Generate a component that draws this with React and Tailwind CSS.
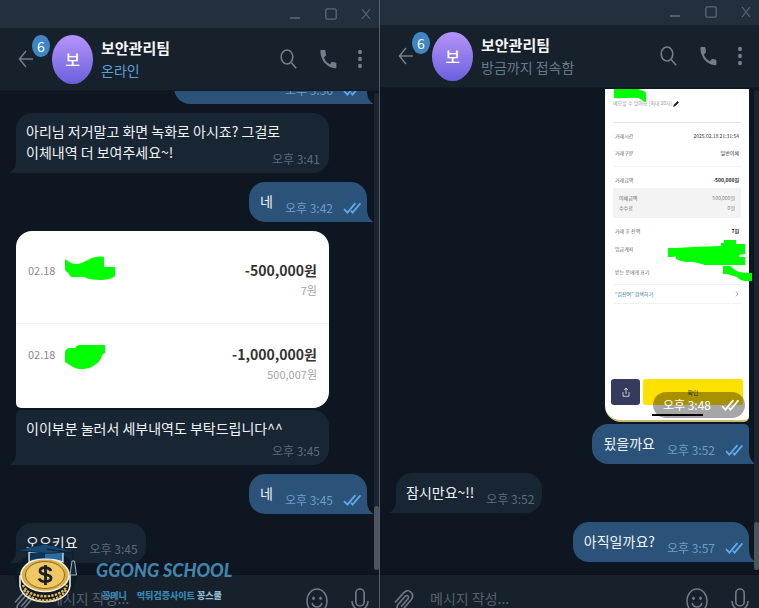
import { clsx } from 'clsx'

const outIcon = 'text-[#62a9e8]'

function Checks({ className }) {
  return (
    <svg viewBox="0 0 18 12" className={clsx('h-3 w-[18px] shrink-0', className)} fill="none" stroke="currentColor" strokeWidth="1.8">
      <path d="M1 7.2 4.4 10.6 12.4 1.2" />
      <path d="M8 8.8 9.6 10.6 17.4 1.2" />
    </svg>
  )
}

function Tail({ out }) {
  return out ? (
    <svg viewBox="0 0 7 14" className="absolute -right-1.5 bottom-0 h-3.5 w-[7px]" fill="#2b5278">
      <path d="M0 0H1C1 7 3 11 7 13.4V14H0Z" />
    </svg>
  ) : (
    <svg viewBox="0 0 7 14" className="absolute -left-1.5 bottom-0 h-3.5 w-[7px]" fill="#182533">
      <path d="M7 0H6C6 7 4 11 0 13.4V14H7Z" />
    </svg>
  )
}

function Bubble({ text, time, out, joined }) {
  return (
    <div
      className={clsx(
        'relative flex min-h-10 items-end gap-3 rounded-[16px]',
        out ? 'self-end rounded-br-none bg-[#2b5278] pr-1.5 pl-[11px]' : 'self-start rounded-bl-none bg-[#182533] pr-2 pl-2.5',
        joined && 'rounded-tr-[5px]',
      )}
    >
      <p className="pt-2 pb-2.5 text-sm leading-[21px] text-[#f0f3f6]">{text}</p>
      <div className="flex items-center gap-2.5 pb-1.5">
        <time className={clsx('text-xs leading-4', out ? 'text-[#6f9cc9]' : 'text-[#5d6c7b]')}>{time}</time>
        {out && <Checks className={outIcon} />}
      </div>
      <Tail out={out} />
    </div>
  )
}

// longer incoming text: the time shares the last line's corner
function WideBubble({ children, time, className }) {
  return (
    <div className={clsx('relative grid w-[313px] max-w-[90%] shrink-0 rounded-[16px] rounded-bl-none bg-[#182533] pr-[9px] pl-2.5', className)}>
      <p className="col-start-1 row-start-1 pt-2 pb-2.5 text-sm leading-[21px] text-[#f0f3f6]">{children}</p>
      <time className="col-start-1 row-start-1 self-end justify-self-end pb-1.5 text-xs leading-4 text-[#5d6c7b]">{time}</time>
      <Tail />
    </div>
  )
}

function TitleBar({ className }) {
  return (
    <div className={clsx('flex shrink-0 items-center justify-end bg-[#242f3d] pr-2 text-[#5d6773]', className)}>
      <button type="button" aria-label="최소화" className="mr-6">
        <svg viewBox="0 0 12 12" className="size-3" stroke="currentColor" strokeWidth="1.6">
          <path d="M1 10H11" />
        </svg>
      </button>
      <button type="button" aria-label="최대화" className="mr-6">
        <svg viewBox="0 0 12 12" className="size-3" fill="none" stroke="currentColor" strokeWidth="1.3">
          <rect x="0.8" y="0.8" width="10.4" height="10.4" rx="1.5" />
        </svg>
      </button>
      <button type="button" aria-label="닫기">
        <svg viewBox="0 0 10 12" className="h-3 w-2.5" stroke="currentColor" strokeWidth="1.2">
          <path d="M1 1 9 11M9 1 1 11" />
        </svg>
      </button>
    </div>
  )
}

function Header({ status, online }) {
  return (
    <header className="flex h-[63px] shrink-0 items-center border-b border-[#121a23] bg-[#17212b] pr-4 pl-[18px] text-[#727e8a]">
      <div className="relative">
        <button type="button" aria-label="뒤로" className="block">
          <svg viewBox="0 0 16 18" className="h-[18px] w-4" fill="none" stroke="currentColor" strokeWidth="1.5">
            <path d="M15 9H1.5M8 1 1.5 9 8 17" />
          </svg>
        </button>
        <span className="absolute -top-[15px] left-3.5 grid h-[22px] w-[18px] place-items-center rounded-[50%] bg-[#3f86c4] text-sm leading-none text-white">6</span>
      </div>
      <div className="ml-[18px] grid h-[49px] w-[41px] place-items-center rounded-[50%] bg-linear-to-b from-[#b694f9] to-[#6c5fdd] text-base font-medium text-white">
        보
      </div>
      <div className="ml-2 min-w-0 flex-1">
        <h2 className="text-[15px] leading-[23px] font-bold text-[#f5f7f9]">보안관리팀</h2>
        <p className={clsx('text-sm leading-[23px]', online ? 'text-[#5a9fdc]' : 'text-[#66788a]')}>{status}</p>
      </div>
      <button type="button" aria-label="검색">
        <svg viewBox="0 0 17 20" className="h-5 w-[17px]" fill="none" stroke="currentColor" strokeWidth="1.6">
          <ellipse cx="7" cy="8" rx="5.8" ry="7" />
          <path d="M11 13.3 16.2 19.2" />
        </svg>
      </button>
      <button type="button" aria-label="통화" className="ml-[23px]">
        <svg viewBox="0 0 17 20" className="h-5 w-[17px]" fill="currentColor">
          <path d="M1.2 1H4.2C5 1 5.3 1.4 5.4 2.1L6 5.5C6.1 6.2 5.9 6.6 5.5 7L3.9 8.7C5.3 11.8 7.2 13.8 9.8 15.2L11.4 13.4C11.8 13 12.2 12.8 12.8 12.9L15.4 13.5C16.1 13.7 16.4 14.1 16.4 14.8V18C16.4 18.8 16 19.2 15.3 19.2C7 19 .4 11.5.4 2.1.4 1.4.6 1 1.2 1Z" />
        </svg>
      </button>
      <button type="button" aria-label="메뉴" className="ml-5">
        <svg viewBox="0 0 6 20" className="h-5 w-1.5" fill="currentColor">
          <ellipse cx="3" cy="3" rx="2" ry="2.3" />
          <ellipse cx="3" cy="10" rx="2" ry="2.3" />
          <ellipse cx="3" cy="17" rx="2" ry="2.3" />
        </svg>
      </button>
    </header>
  )
}

function Composer({ id }) {
  return (
    <form className="h-[34px] shrink-0 overflow-hidden border-t border-[#0c131b] bg-[#17212b] text-[#6f7b87]">
      <div className="flex h-[52px] items-center pr-2.5 pl-3.5">
        <button type="button" aria-label="파일 첨부">
          <svg viewBox="0 0 20 24" className="h-6 w-5" fill="none" stroke="currentColor" strokeWidth="1.6" strokeLinecap="round">
            <path d="M1.5 13 9.8 3.6C15-1.6 21.4 5.4 17 11L9 20.2C5.4 23.6 1.2 19 4.2 15.2L11.2 7.3C13.4 5.2 15.6 7.8 13.8 10L7.4 17.2" />
          </svg>
        </button>
        <label htmlFor={id} className="sr-only">메시지</label>
        <input id={id} placeholder="메시지 작성..." className="mb-1.5 ml-4 h-4 min-w-0 flex-1 bg-transparent text-sm leading-4 outline-none placeholder:text-[#56626e]" />
        <button type="button" aria-label="이모티콘">
          <svg viewBox="0 0 22 26" className="h-[26px] w-[22px]" fill="none" stroke="currentColor" strokeWidth="1.5">
            <ellipse cx="11" cy="13" rx="10" ry="12" />
            <path d="M6.3 15.5C7.5 20 14.5 20 15.7 15.5" strokeLinecap="round" />
            <ellipse cx="7.5" cy="10.3" rx="1.3" ry="1.7" fill="currentColor" stroke="none" />
            <ellipse cx="14.5" cy="10.3" rx="1.3" ry="1.7" fill="currentColor" stroke="none" />
          </svg>
        </button>
        <button type="button" aria-label="음성 메시지" className="ml-[23px]">
          <svg viewBox="0 0 18 26" className="h-[26px] w-[18px]" fill="none" stroke="currentColor" strokeWidth="1.6">
            <rect x="4.8" y="1" width="8.4" height="17" rx="4.2" />
            <path d="M1 13C1 24.5 17 24.5 17 13M9 21.5V26" />
          </svg>
        </button>
      </div>
    </form>
  )
}

function Scrollbar({ thumb }) {
  return (
    <div className="absolute top-0.5 right-0 bottom-1 flex w-[5px] items-end rounded-full bg-[#1b242f]">
      <div className={clsx('w-full rounded-full bg-[#4c545d]', thumb)} />
    </div>
  )
}

function Transfer({ amount, balance, children }) {
  return (
    <div className="flex flex-1 justify-between px-3">
      <div className="flex gap-2.5">
        <span className="text-[11px] leading-5 text-[#8b8b8b]">02.18</span>
        {children}
      </div>
      <div className="text-right">
        <p className="text-sm leading-5 font-bold text-[#333]">{amount}</p>
        <p className="text-[11px] leading-5 text-[#a5a5a5]">{balance}</p>
      </div>
    </div>
  )
}

function TransferCard() {
  return (
    <div className="mt-[9px] flex h-[177px] w-[313px] max-w-[90%] shrink-0 flex-col rounded-2xl rounded-bl-[5px] bg-white pt-[29px]">
      <Transfer amount="-500,000원" balance="7원">
        <svg viewBox="0 0 50 25" className="-mt-1 h-[25px] w-[50px]" fill="#00ff00">
          <path d="M0 3C3 5 6 8 11 8C19 8 25 1 32 1C36 0 39 1 39 1V11H50V20C43 26 27 24 21 22C16 19 8 23 5 20C4 16 0 16 0 13Z" />
        </svg>
      </Transfer>
      <div className="-mt-0.5 mb-5 h-px bg-[#f1f1f1]" />
      <Transfer amount="-1,000,000원" balance="500,007원">
        <svg viewBox="0 0 40 26" className="h-[26px] w-10" fill="#00ff00">
          <path d="M0 8C1 3 6 4 10 4C12 0 16 1 21 1H40V9C36 10 37 14 35 16C30 23 20 26 15 25C9 25 4 20 0 18Z" />
        </svg>
      </Transfer>
    </div>
  )
}

function ReceiptRow({ label, value, bold, className }) {
  return (
    <div className={clsx('flex shrink-0 items-center justify-between px-0.5 text-[5px] leading-[6px]', className)}>
      <dt className="text-[#666]">{label}</dt>
      <dd className={bold ? 'font-bold text-[#222]' : 'text-[#333]'}>{value}</dd>
    </div>
  )
}

function Receipt() {
  return (
    <div className="relative flex h-[333px] w-36 shrink-0 flex-col self-end rounded-b-2xl rounded-br-[5px] border-b-2 border-[#c9bd72] bg-white px-2">
      <p className="mt-2 flex h-[26px] shrink-0 items-start gap-px border-b border-[#e2e2e2] pt-0.5 text-[5px] leading-[8px] text-[#999]">
        메모할 수 있어요 (최대 20자)
        <svg viewBox="0 0 6 6" className="mt-0.5 size-1.5" fill="#222">
          <path d="M0 6 1 3.6 4.6 0 6 1.4 2.4 5Z" />
        </svg>
      </p>
      <dl className="flex flex-col">
        <ReceiptRow label="거래시간" value="2025.02.18 21:31:54" className="mt-1 h-[17px]" />
        <ReceiptRow label="거래구분" value="일반이체" className="h-[17px]" />
        <ReceiptRow label="거래금액" value="-500,000원" bold className="mt-[5px] h-[22px] border-t border-[#f1f1f1] pt-1" />
        <div className="flex h-[30px] flex-col justify-center bg-[#f3f3f3] px-1 [&_dd]:text-[#888]">
          <ReceiptRow label="이체금액" value="500,000원" className="h-2.5" />
          <ReceiptRow label="수수료" value="0원" className="h-2.5" />
        </div>
        <ReceiptRow label="거래 후 잔액" value="7원" bold className="mt-1 h-[18px]" />
        <ReceiptRow label="입금계좌" className="h-[17px]" />
        <ReceiptRow label="받는 분에게 표기" className="mt-[3px] h-6" />
      </dl>
      <a href="#search" className="flex h-5 shrink-0 items-center justify-between border-y border-[#f1f1f1] px-0.5 text-[5px] text-[#2f7295]">
        “김잔여” 검색하기
        <svg viewBox="0 0 4 6" className="h-1.5 w-1" fill="none" stroke="#999" strokeWidth="0.7">
          <path d="M1 .5 3 3 1 5.5" />
        </svg>
      </a>
      <div className="-mx-0.5 mt-auto mb-[9px] flex h-[26px] shrink-0 gap-[3px]">
        <button type="button" aria-label="공유" className="grid w-[29px] place-items-center rounded-[3px] bg-[#353b5c]">
          <svg viewBox="0 0 8 10" className="h-2.5 w-2" fill="none" stroke="#e7e8ee" strokeWidth="0.8">
            <path d="M1 5V9.3H7V5M4 7V1M2.2 3 4 1 5.8 3" />
          </svg>
        </button>
        <button type="button" className="flex-1 rounded-[3px] bg-[#ffe100] text-[6px] text-[#453d12]">확인</button>
      </div>
      <div className="mb-1 h-[2px] w-[51px] shrink-0 self-center bg-black" />

      {/* scribbles over the private parts */}
      <svg viewBox="0 0 150 200" className="absolute top-0 left-0 h-[200px] w-[150px]" fill="#00ff00">
        <path d="M9 0H33C36 2 40 1 41 4V13C38 13 37 10 33 9C25 8 17 10 9 9Z" />
        <path d="M63 159H72L88 158 116 157V154H119V151H131V155H140V165L134 166V168H140V176H100C94 175 90 172 84 173C77 173 74 171 71 170V167C68 168 66 168 63 168Z" />
        <path d="M118 177H125L130 181C136 185 140 183 147 184V192H139L134 190C133 187 126 187 123 185H118Z" />
      </svg>
      <div className="absolute right-1 bottom-0.5 flex h-[26px] items-center gap-2.5 rounded-full bg-black/35 pr-1.5 pl-2.5 text-xs text-white">
        <time>오후 3:48</time>
        <Checks />
      </div>
    </div>
  )
}

function Watermark() {
  return (
    <div className="pointer-events-none absolute bottom-1 left-3.5 flex items-end gap-[18px]">
      <svg viewBox="0 0 64 60" className="h-[60px] w-16">
        <ellipse cx="32" cy="32" rx="31" ry="25" fill="#0b1b28" />
        <path d="M6 32V42C9 63 53 63 56 42V32Z" fill="#0f1b24" stroke="#f4efe0" strokeWidth="1.6" />
        <path d="M9 41C14 56 48 56 53 41" fill="none" stroke="#e3b64e" strokeWidth="2.4" strokeDasharray="2.4 1.2" />
        <path d="M10 46C17 60 45 60 52 46" fill="none" stroke="#e3b64e" strokeWidth="2.4" strokeDasharray="2.4 1.2" />
        <ellipse cx="31" cy="31" rx="24" ry="16.5" fill="#dcae4a" stroke="#f8f1dc" strokeWidth="1.6" />
        <ellipse cx="31" cy="31" rx="19.5" ry="13.5" fill="#f0c863" stroke="#6b5420" strokeWidth="0.8" />
        <path d="M37 27C35 22.5 26 22.5 26 27C26 32 37 29.5 37 34C37 38.5 27 39 25 34.5M31.5 21V41" fill="none" stroke="#172029" strokeWidth="2.8" />
        <path d="M15 8V18C24 14 40 14 49 18V8Z" fill="#2a6c9b" stroke="#eef3f6" strokeWidth="1.2" />
        <path d="M16 9V16.5C21 14.5 26 14 31 14V9Z" fill="#103452" />
        <path d="M1 7 31 0 61 8C52 7.5 42 9 32 9.5C22 8 11 6.5 1 7Z" fill="#174b74" stroke="#0b2236" strokeWidth="0.8" />
        <path d="M33 5 59 9V17" fill="none" stroke="#0b2236" strokeWidth="1.4" />
        <path d="M58 17H60.5L62.5 31H56Z" fill="#10273a" stroke="#cdd7de" strokeWidth="0.8" />
      </svg>
      <div>
        <p className="font-[Lato] text-lg leading-5 font-black whitespace-nowrap text-[#4285ab] italic">GGONG SCHOOL</p>
        <p className="mt-2 flex gap-2.5 pl-1.5 text-[9px] leading-4 font-black whitespace-nowrap text-[#3787b5]">
          <span>꽁머니</span>
          <span>
            먹튀검증사이트 <span className="text-[#8fb9cf]">꽁스쿨</span>
          </span>
        </p>
      </div>
    </div>
  )
}

function App() {
  return (
    <main className="flex h-screen overflow-hidden bg-[#0e1621] font-['Noto_Sans_CJK_KR',sans-serif]">
      <section className="relative flex min-w-0 flex-1 flex-col">
        <TitleBar className="h-7" />
        <Header status="온라인" online />
        <div className="relative flex min-h-0 flex-1 flex-col justify-end overflow-hidden pr-3 pb-[11px] pl-4">
          <div className="relative flex h-10 w-[193px] shrink-0 items-end justify-end gap-2.5 self-end rounded-2xl rounded-br-none bg-[#2b5278] pr-1.5 pb-1.5">
            <time className="text-xs leading-4 text-[#6f9cc9]">오후 3:36</time>
            <Checks className={clsx('mb-0.5', outIcon)} />
            <Tail out />
          </div>
          <div className="mt-[9px] flex shrink-0 flex-col gap-[9px]">
            <WideBubble time="오후 3:41">
              아리님 저거말고 화면 녹화로 아시죠? 그걸로
              <br />
              이체내역 더 보여주세요~!
            </WideBubble>
            <Bubble text="네" time="오후 3:42" out />
          </div>
          <TransferCard />
          <WideBubble time="오후 3:45" className="mt-0.5 mb-[9px] min-h-[55px] rounded-tl-[5px]">
            이이부분 눌러서 세부내역도 부탁드립니다^^
          </WideBubble>
          <div className="flex shrink-0 flex-col gap-[9px]">
            <Bubble text="네" time="오후 3:45" out />
            <Bubble text="오오키요" time="오후 3:45" />
          </div>
          <Scrollbar thumb="h-16" />
        </div>
        <Composer id="message-left" />
        <Watermark />
      </section>

      <section className="flex min-w-0 flex-1 flex-col border-l border-[#535c66]">
        <TitleBar className="h-[25px] pb-0.5" />
        <Header status="방금까지 접속함" />
        <div className="relative flex min-h-0 flex-1 flex-col justify-end overflow-hidden pr-2.5 pb-3 pl-4">
          <Receipt />
          <div className="mt-0.5 flex shrink-0 flex-col gap-[9px]">
            <Bubble text="됬을까요" time="오후 3:52" out joined />
            <Bubble text="잠시만요~!!" time="오후 3:52" />
            <Bubble text="아직일까요?" time="오후 3:57" out />
          </div>
          <Scrollbar thumb="h-12" />
        </div>
        <Composer id="message-right" />
      </section>
    </main>
  )
}

export default App
